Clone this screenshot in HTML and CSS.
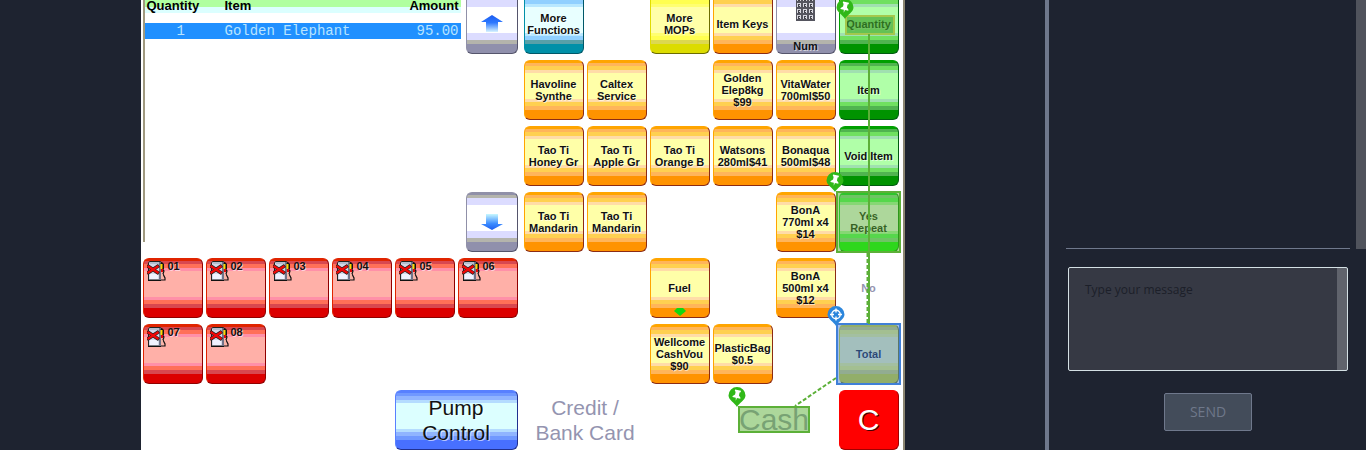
FILE: index.html
```
<!DOCTYPE html>
<html lang="en">
<head>
<meta charset="utf-8">
<title>Point of sale</title>
<link rel="stylesheet" href="styles.css">
</head>
<body>
<svg class="defs" aria-hidden="true">
  <defs>
    <linearGradient id="up" x1="0" y1="0" x2="0" y2="1"><stop offset="0" stop-color="#1c5cf0"/><stop offset=".45" stop-color="#2c78ff"/><stop offset="1" stop-color="#d8f4ff"/></linearGradient>
    <linearGradient id="down" x1="0" y1="0" x2="0" y2="1"><stop offset="0" stop-color="#c8f8ff"/><stop offset=".6" stop-color="#3c8cff"/><stop offset="1" stop-color="#1c5cf0"/></linearGradient>
    <pattern id="keys" width="6" height="6" patternUnits="userSpaceOnUse"><rect width="6" height="6" fill="#55555f"/><path d="M1 1h4v4h-4z" fill="#d8d8e0"/><path d="M2 2h2v1h-1v1h1v1h-2z" fill="#44444c"/></pattern>
    <symbol id="pump" viewBox="0 0 19 22">
      <path d="M2.500 1.500h11V20h-12V3z" fill="#d4d8e8" stroke="#222" stroke-width="1"/>
      <path d="M12 2h2v19h-2z" fill="#70748a"/>
      <path d="M3 2h9v2H3z" fill="#b4bccc"/>
      <path d="M3 14h8v5H3z" fill="#f0f2ff"/>
      <path d="M1 20.500h13" stroke="#111" stroke-width="1"/>
      <path d="M14 2.500l2 2v5" fill="none" stroke="#111" stroke-width="2"/>
      <path d="M14.500 4v5" stroke="#ffd800" stroke-width="2"/>
      <path d="M15 9l2 2-1 3 2 4v2h-4" fill="none" stroke="#111" stroke-width="1.200"/>
      <path d="M15 9v3" stroke="#e00808" stroke-width="2"/>
      <path d="M15 14v5" stroke="#f4b8a8" stroke-width="1.500"/>
      <path d="M0 5.500l12 8M12 5.500l-12 8" stroke="#222" stroke-width="3.600"/>
      <path d="M.5 6l11 7M11.500 6l-11 7" stroke="#f00808" stroke-width="2.400"/>
    </symbol>
    <symbol id="pin" viewBox="0 0 18 20">
      <path d="M9 20C7 16 .5 13 .5 8.500a8.500 8.500 0 0 1 17 0C17.500 13 11 16 9 20z" fill="#30b818"/>
      <g transform="rotate(12 9 8)"><path d="M6 3h6v1.500l-1 .5v3l2 2v1H9.600L9 14l-.6-3H5v-1l2-2V5l-1-.5z" fill="#fff"/></g>
    </symbol>
    <symbol id="target" viewBox="0 0 18 20">
      <path d="M9 20C7 16 .5 13 .5 8.500a8.500 8.500 0 0 1 17 0C17.500 13 11 16 9 20z" fill="#2c86dc"/>
      <circle cx="9" cy="8.500" r="4.200" fill="none" stroke="#fff" stroke-width="1.400"/>
      <path d="M9 2.500v4M9 10.500v4M3 8.500h4M11 8.500h4" stroke="#fff" stroke-width="1.400"/>
    </symbol>
  </defs>
</svg>
<main class="stage">
  <div class="pos">
    <section class="sale">
      <div class="receipt-row">
        <div class="receipt">
          <table>
            <thead><tr><th class="qty">Quantity</th><th class="item">Item</th><th class="amount">Amount</th></tr></thead>
            <tbody><tr><td class="qty">1</td><td class="item">Golden Elephant</td><td class="amount">95.00</td></tr></tbody>
          </table>
        </div>
        <div class="scroll-keys">
          <button class="key grey" aria-label="Scroll up"><svg width="22" height="18" viewBox="0 0 22 18"><path d="M11 0l11 7h-5v10H5V7H0z" fill="url(#up)"/></svg></button>
          <button class="key grey" aria-label="Scroll down"><svg width="22" height="18" viewBox="0 0 22 18"><path d="M11 17l11-6h-5V1H5v10H0z" fill="url(#down)"/></svg></button>
        </div>
      </div>
      <div class="pumps">
        <button class="key red"><svg class="pump"><use href="#pump"/></svg>01</button>
        <button class="key red"><svg class="pump"><use href="#pump"/></svg>02</button>
        <button class="key red"><svg class="pump"><use href="#pump"/></svg>03</button>
        <button class="key red"><svg class="pump"><use href="#pump"/></svg>04</button>
        <button class="key red"><svg class="pump"><use href="#pump"/></svg>05</button>
        <button class="key red"><svg class="pump"><use href="#pump"/></svg>06</button>
        <button class="key red"><svg class="pump"><use href="#pump"/></svg>07</button>
        <button class="key red"><svg class="pump"><use href="#pump"/></svg>08</button>
        <button class="key blue large pump-control">Pump<br>Control</button>
      </div>
    </section>
    <section class="keypad">
      <button class="key teal">More<br>Functions</button>
      <span></span>
      <button class="key yellow">More<br>MOPs</button>
      <button class="key">Item Keys</button>
      <button class="key grey num"><svg width="19" height="26" viewBox="0 0 19 26"><rect width="19" height="25" fill="url(#keys)"/></svg>Num</button>
      <button class="key green">Quantity<span class="mark mark-text"></span><svg class="pin pin-quantity"><use href="#pin"/></svg></button>

      <button class="key">Havoline<br>Synthe</button>
      <button class="key">Caltex<br>Service</button>
      <span></span>
      <button class="key">Golden<br>Elep8kg<br>$99</button>
      <button class="key">VitaWater<br>700ml$50</button>
      <button class="key green">Item</button>

      <button class="key">Tao Ti<br>Honey Gr</button>
      <button class="key">Tao Ti<br>Apple Gr</button>
      <button class="key">Tao Ti<br>Orange B</button>
      <button class="key">Watsons<br>280ml$41</button>
      <button class="key">Bonaqua<br>500ml$48</button>
      <button class="key green">Void Item</button>

      <button class="key">Tao Ti<br>Mandarin</button>
      <button class="key">Tao Ti<br>Mandarin</button>
      <span></span>
      <span></span>
      <button class="key">BonA<br>770ml x4<br>$14</button>
      <button class="key lime">Yes<br>Repeat<span class="mark mark-key"></span><svg class="pin"><use href="#pin"/></svg></button>

      <span></span>
      <span></span>
      <button class="key">Fuel<svg class="more" viewBox="0 0 12 8"><path d="M3 0h6l3 3-6 5-6-5z" fill="#10d810"/></svg></button>
      <span></span>
      <button class="key">BonA<br>500ml x4<br>$12</button>
      <button class="key plain">No</button>

      <span></span>
      <span></span>
      <button class="key">Wellcome<br>CashVou<br>$90</button>
      <button class="key">PlasticBag<br>$0.5</button>
      <span></span>
      <button class="key yellow">Total<span class="mark mark-key mark-target"></span><svg class="pin pin-target"><use href="#target"/></svg></button>

      <button class="key plain large wide">Credit /<br>Bank Card</button>
      <span></span>
      <button class="key plain huge wide"><span class="cash">Cash<span class="mark mark-cash"></span><svg class="pin pin-cash"><use href="#pin"/></svg></span></button>
      <button class="key clear huge">C</button>
      <svg class="links" viewBox="0 0 375 456" aria-hidden="true">
        <path d="M345 40V330" stroke="#5cb038" stroke-width="2"/>
        <path d="M343.500 259V330M312 384L271 412" fill="none" stroke="#5cb038" stroke-width="2" stroke-dasharray="4 2"/>
      </svg>
    </section>
  </div>
</main>
<aside class="chat">
  <div class="history"></div>
  <form class="composer">
    <div class="field"><textarea placeholder="Type your message" aria-label="Message"></textarea></div>
    <button type="button" class="send" disabled>SEND</button>
  </form>
</aside>
</body>
</html>
```
FILE: styles.css
```
* { box-sizing: border-box; }

body {
  display: flex;
  height: 100vh;
  margin: 0;
  overflow: hidden;
  background: #1e2330;
  font-family: "Liberation Sans", Arial, sans-serif;
}

.defs { position: absolute; width: 0; height: 0; }

.stage {
  flex: 1;
  display: flex;
  justify-content: center;
  align-items: flex-end;
  overflow: hidden;
}

.pos {
  display: flex;
  gap: 6px;
  padding: 0 4px 0 2px;
  background: #fff;
  border-right: 2px solid #8c8672;
}

.sale { display: flex; flex-direction: column; gap: 6px; }

.receipt-row { display: flex; justify-content: space-between; height: 258px; }

.receipt {
  width: 320px;
  height: 248px;
  padding-right: 2px;
  border-left: 2px solid #a09a80;
}

.receipt table {
  width: 100%;
  border-collapse: separate;
  border-spacing: 0;
  table-layout: fixed;
}

.receipt th {
  height: 19px;
  padding: 5px 2px 0;
  background: linear-gradient(#80f080 6px, #b0ffa0 6px 13px, #dcffff 13px);
  font-size: 13px;
  line-height: 14px;
  text-align: left;
}

.receipt td {
  height: 26px;
  padding: 0 2px;
  background: linear-gradient(#fff 10px, #2090ff 10px);
  color: #b8e4ff;
  font: 14px/15px "Liberation Mono", "Courier New", monospace;
  vertical-align: bottom;
}

.receipt .qty { width: 78px; }
.receipt td.qty { padding-left: 32px; }
.receipt .amount { width: 90px; text-align: right; }

.scroll-keys {
  display: flex;
  flex-direction: column;
  justify-content: space-between;
  width: 52px;
}

.pumps, .keypad {
  display: grid;
  grid-template-columns: repeat(6, 60px);
  grid-auto-rows: 60px;
  gap: 6px 3px;
}

.keypad { position: relative; }

.key {
  --edge: #ffa500;
  --outer: #ffb55a;
  --middle: #ffd050;
  --inner: #ffdca8;
  --center: #ffffa8;
  --base: #ff9300;
  --side: #8c2c14;
  position: relative;
  display: flex;
  justify-content: center;
  align-items: center;
  width: 100%;
  height: 60px;
  padding: 0;
  border: 1px solid var(--edge);
  border-right-color: var(--side);
  border-bottom-color: var(--side);
  border-radius: 6px;
  background: linear-gradient(var(--edge) 2px, var(--outer) 2px 5px, var(--middle) 5px 9px, var(--inner) 9px 12px, var(--center) 12px 38px, var(--inner) 38px 41px, var(--middle) 41px 45px, var(--outer) 45px 49px, var(--base) 49px);
  color: #111;
  font: bold 11px/12px "Liberation Sans", Arial, sans-serif;
  text-align: center;
  text-shadow: 1px 1px rgba(255, 255, 255, .6);
  white-space: nowrap;
}

.green {
  --edge: #00a000;
  --outer: #50b450;
  --middle: #70e060;
  --inner: #a0e0b0;
  --center: #b0ffa8;
  --base: #009300;
  --side: #005c10;
}

.lime {
  --edge: #00d820;
  --outer: #80d890;
  --middle: #50ff60;
  --inner: #b0ffb0;
  --center: #fff;
  --base: #00ff00;
  --side: #008000;
}

.yellow {
  --edge: #e0dc00;
  --outer: #dcd850;
  --middle: #ffff50;
  --inner: #ffff70;
  --center: #ffffa8;
  --base: #dcdc00;
  --side: #6c6c00;
}

.teal {
  --edge: #0090a8;
  --outer: #58a0a8;
  --middle: #90d0ff;
  --inner: #b8e8ff;
  --center: #e8ffff;
  --base: #0090a8;
  --side: #005868;
}

.grey {
  --edge: #9090a8;
  --outer: #b4b4ac;
  --middle: #dcdcff;
  --inner: #dcdcff;
  --center: #fff;
  --base: #9090ac;
  --side: #55556c;
}

.red {
  --edge: #e02400;
  --outer: #d84850;
  --middle: #ff7058;
  --inner: #ff90a8;
  --center: #ffb0a8;
  --base: #dc0000;
  --side: #900000;
  justify-content: flex-start;
  align-items: flex-start;
  gap: 2px;
  padding: 1px 3px;
}

.blue {
  --edge: #5880ff;
  --outer: #7098ff;
  --middle: #90b4ff;
  --inner: #b4dcff;
  --center: #dcffff;
  --base: #4870ff;
  --side: #203090;
}

.clear {
  border-color: #ff0000 #a00000 #a00000 #ff0000;
  background: #ff0000;
  color: #fff;
  text-shadow: 1px 1px #400;
}

.plain {
  border-color: transparent;
  background: none;
  color: #9494b0;
}

.large { font: 21px/25px "Liberation Sans", Arial, sans-serif; }
.huge { font: 30px/30px "Liberation Sans", Arial, sans-serif; }
.wide { grid-column: span 2; }
.pump-control { grid-column: 5 / span 2; grid-row: 3; }
.pump { width: 19px; height: 22px; }

.num { flex-direction: column; justify-content: flex-end; gap: 18px; padding-bottom: 1px; }

.more {
  position: absolute;
  bottom: 1px;
  left: 23px;
  width: 12px;
  height: 8px;
}

.mark {
  position: absolute;
  border: 2px solid #5cb038;
  background: rgba(92, 176, 56, .5);
}

.mark-text { inset: 20px 3px 18px 5px; border-color: #a4c84c; background: rgba(60, 160, 40, .65); }
.mark-key { inset: -2px -3px -2px -4px; }
.mark-target { border-color: #4080d8; background: rgba(71, 128, 210, .5); }

.cash { position: relative; }
.mark-cash { inset: 1px -1px 2px; }

.links {
  position: absolute;
  z-index: 1;
  inset: 0;
  width: 100%;
  height: 100%;
  pointer-events: none;
}

.pin {
  position: absolute;
  z-index: 2;
  top: -21px;
  left: -14px;
  width: 18px;
  height: 20px;
}

.pin-quantity { top: 4px; left: -4px; }
.pin-target { top: -19px; left: -13px; }
.pin-cash { top: -18px; left: -11px; }

.chat {
  display: flex;
  flex-direction: column;
  width: 321px;
  border-left: 4px solid #6f788c;
}

.history {
  flex: 1;
  margin-left: 17px;
  background: linear-gradient(#6f788c, #6f788c) left bottom / calc(100% - 6px) 1px no-repeat;
  border-right: 10px solid #50535c;
}

.composer {
  display: flex;
  flex-direction: column;
  align-items: center;
  gap: 22px;
  padding: 18px 18px 19px 19px;
}

.field {
  display: flex;
  width: 100%;
  height: 104px;
  border: 1px solid #d4e0e4;
  border-radius: 2px;
  background: linear-gradient(#60636c, #60636c) right / 10px 100% no-repeat #363944;
}

.field textarea {
  flex: 1;
  margin-right: 10px;
  padding: 13px 16px;
  border: 0;
  outline: 0;
  resize: none;
  background: none;
  color: #dfe4ea;
  font: 12px/18px "Open Sans", sans-serif;
}

.field textarea::placeholder { color: #1c1f29; opacity: 1; }

.send {
  width: 88px;
  height: 38px;
  border: 1px solid #6f788c;
  border-radius: 2px;
  background: #434c5a;
  color: #6f788a;
  font: 14px/20px "Open Sans", sans-serif;
}
```
